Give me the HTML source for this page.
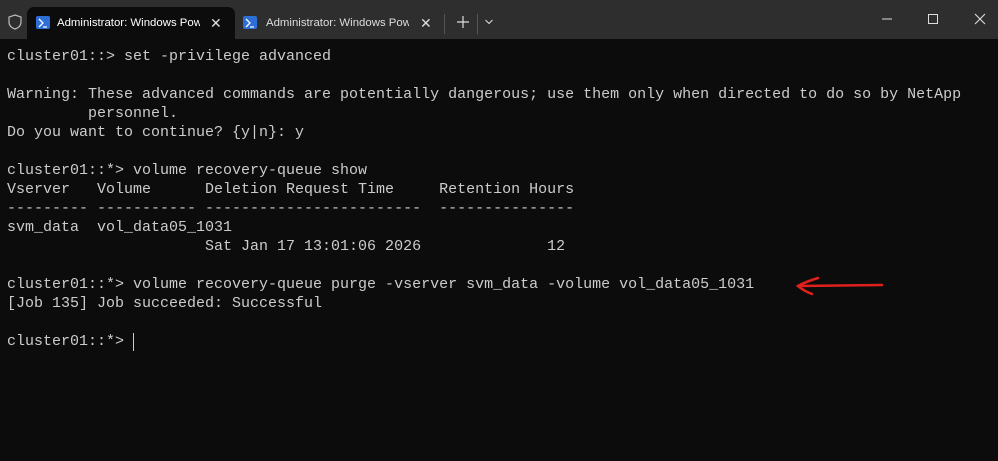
<!DOCTYPE html>
<html><head><style>
body{margin:0;width:998px;height:461px;background:#0c0c0c;overflow:hidden;position:relative;font-family:"Liberation Sans",sans-serif}
.bar{position:absolute;left:0;top:0;width:998px;height:39px;background:#2e2e2e}
.tab{position:absolute;top:7px;height:32px;font-size:11.4px;color:#fff;line-height:32px}
.t1{left:27px;width:208px;background:#0c0c0c;border-radius:7px 7px 0 0}
.t2{left:233px;color:#ddd}
.ps{position:absolute;top:9px;width:14px;height:13px;background:#2d6fd6;border-radius:2px}
pre{position:absolute;left:7px;top:47px;margin:0;font-family:"Liberation Mono",monospace;font-size:15px;line-height:19px;color:#cccccc}
</style></head><body>
<div class="bar"></div>
<svg style="position:absolute;left:8px;top:14px" width="14" height="16" viewBox="0 0 14 16"><path d="M7 1 L13 3 V8 C13 12 10 14 7 15 C4 14 1 12 1 8 V3 Z" fill="none" stroke="#bbb" stroke-width="1.2"/></svg>
<div class="tab t1"><div class="ps" style="left:9px"></div><svg style="position:absolute;left:11px;top:11px" width="10" height="10"><path d="M1 1 L5 5 L1 9" stroke="#fff" fill="none" stroke-width="1.3"/><path d="M5 9 H9" stroke="#fff" stroke-width="1.2"/></svg><span style="position:absolute;left:30px;white-space:nowrap;width:143px;overflow:hidden">Administrator: Windows PowerShell</span><span style="position:absolute;left:183px;font-size:14px;color:#ddd">✕</span></div>
<div class="tab t2" style="width:200px"><div class="ps" style="left:10px"></div><svg style="position:absolute;left:12px;top:11px" width="10" height="10"><path d="M1 1 L5 5 L1 9" stroke="#fff" fill="none" stroke-width="1.3"/><path d="M5 9 H9" stroke="#fff" stroke-width="1.2"/></svg><span style="position:absolute;left:33px;white-space:nowrap;overflow:hidden;width:143px">Administrator: Windows PowerShell</span><span style="position:absolute;left:187px;font-size:14px">✕</span></div>
<div style="position:absolute;left:444px;top:14px;width:1px;height:20px;background:#555"></div>
<div style="position:absolute;left:477px;top:14px;width:1px;height:20px;background:#555"></div>
<svg style="position:absolute;left:457px;top:16px" width="12" height="12"><path d="M6 0V12M0 6H12" stroke="#ddd" stroke-width="1.2"/></svg>
<svg style="position:absolute;left:485px;top:19px" width="8" height="6"><path d="M0.5 1 L4 4.5 L7.5 1" stroke="#ddd" fill="none"/></svg>
<svg style="position:absolute;left:882px;top:14px" width="10" height="10"><path d="M0 5H10" stroke="#ddd"/></svg>
<svg style="position:absolute;left:928px;top:14px" width="11" height="11"><rect x="0.5" y="0.5" width="9" height="9" fill="none" stroke="#ddd"/></svg>
<svg style="position:absolute;left:974px;top:13px" width="12" height="12"><path d="M1 1L11 11M11 1L1 11" stroke="#ddd" stroke-width="1.1"/></svg>
<pre>cluster01::&gt; set -privilege advanced

Warning: These advanced commands are potentially dangerous; use them only when directed to do so by NetApp
         personnel.
Do you want to continue? {y|n}: y

cluster01::*&gt; volume recovery-queue show
Vserver   Volume      Deletion Request Time     Retention Hours
--------- ----------- ------------------------  ---------------
svm_data  vol_data05_1031
                      Sat Jan 17 13:01:06 2026              12

cluster01::*&gt; volume recovery-queue purge -vserver svm_data -volume vol_data05_1031
[Job 135] Job succeeded: Successful

cluster01::*&gt; </pre>
<div style="position:absolute;left:133px;top:333px;width:1px;height:18px;background:#ccc"></div>
<svg style="position:absolute;left:0;top:0" width="998" height="461"><g stroke="#e0201c" stroke-width="2.5" fill="none" stroke-linecap="round"><path d="M882 285 L798 286"/><path d="M818 278 Q805 282 798 286 Q804 291 812 294"/></g></svg>
</body></html>
